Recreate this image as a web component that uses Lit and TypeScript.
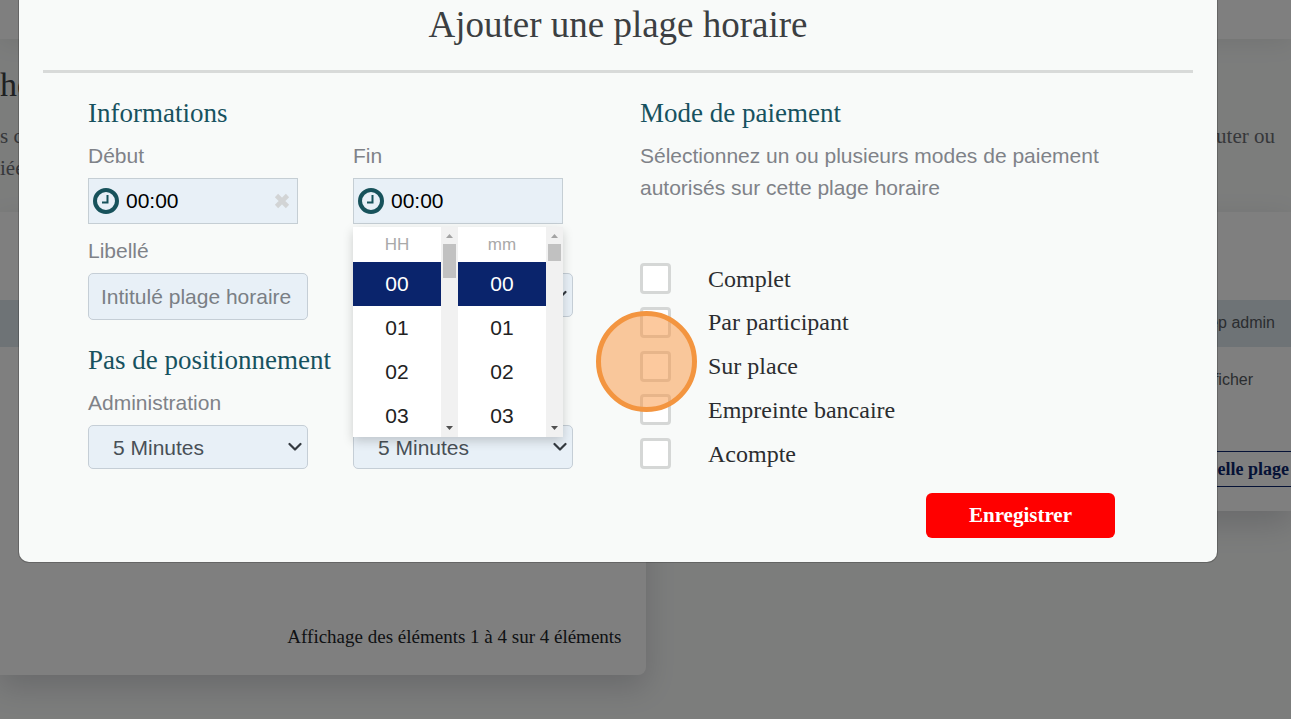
import { LitElement, html, css, svg } from "lit";
import { customElement, property } from "lit/decorators.js";
import { classMap } from "lit/directives/class-map.js";

const clockIcon = html`<svg class="clock" viewBox="0 0 26 26" aria-hidden="true">
  <circle cx="13" cy="13" r="11" fill="none" stroke="#17525b" stroke-width="4"></circle>
  <path d="M14.5 7v7.5H9" fill="none" stroke="#17525b" stroke-width="2"></path>
</svg>`;

const arrow = (d: string, fill: string) => html`<svg class="arrow" viewBox="0 0 17 17" aria-hidden="true">
  ${svg`<path d=${d} fill=${fill}></path>`}
</svg>`;

@customElement("time-column")
class TimeColumn extends LitElement {
  @property() unit = "";
  @property({ type: Boolean }) short = false;

  static styles = css`
    :host {
      display: flex;
      flex: 1;
      min-width: 0;
    }
    .list {
      flex: 1;
      margin: 0;
      padding: 0;
      list-style: none;
      background: #fff;
      text-align: center;
    }
    .unit {
      line-height: 35px;
      font-size: 17px;
      color: #a9a9a9;
    }
    .value {
      display: block;
      width: 100%;
      height: 44px;
      padding: 0;
      border: 0;
      background: none;
      font: inherit;
      color: #222;
    }
    .active {
      background: #0a246c;
      color: #fff;
    }
    .bar {
      display: flex;
      flex-direction: column;
      align-items: center;
      width: 17px;
      background: #f1f1f1;
    }
    .thumb {
      width: 13px;
      height: 34px;
      background: #c1c1c1;
      margin-bottom: auto;
    }
    .small {
      height: 17px;
    }
    .arrow {
      width: 17px;
      height: 17px;
    }
  `;

  render() {
    return html`
      <ul class="list">
        <li class="unit">${this.unit}</li>
        ${["00", "01", "02", "03"].map(
          (v, i) => html`<li>
            <button type="button" class=${classMap({ value: true, active: i === 0 })}>${v}</button>
          </li>`
        )}
      </ul>
      <div class="bar">
        ${arrow("M5 11l3.5-4 3.5 4z", "#a3a3a3")}
        <div class=${classMap({ thumb: true, small: this.short })}></div>
        ${arrow("M5 6h7l-3.5 4z", "#505050")}
      </div>
    `;
  }
}

@customElement("app-root")
class AppRoot extends LitElement {
  static styles = css`
    :host {
      display: block;
      position: relative;
      height: 100vh;
      overflow: hidden;
      background: #f8faf9;
      font-family: "Liberation Sans", Arial, sans-serif;
      font-size: 21px;
      color: #212529;
    }
    * {
      box-sizing: border-box;
    }
    h1,
    h2,
    p {
      margin: 0;
      font-weight: 400;
    }
    h1,
    h2,
    .serif {
      font-family: "Liberation Serif", "Times New Roman", serif;
    }

    .page {
      display: flex;
      flex-direction: column;
      height: 100%;
    }
    .topbar {
      height: 39px;
      background: #fff;
      box-shadow: 0 4px 24px rgba(0, 0, 0, 0.08);
    }
    .intro {
      height: 173px;
      padding: 25px 16px 0 0;
      color: #6c6f74;
      line-height: 32px;
    }
    .intro-title {
      font-size: 34px;
      line-height: 42px;
      color: #3c4044;
      margin-bottom: 14px;
    }
    .line {
      display: flex;
      justify-content: space-between;
    }
    .cards {
      flex: 1;
      display: grid;
      grid-template-columns: 1fr 1fr;
      align-items: start;
    }
    .card {
      background: #fff;
      box-shadow: 0 12px 30px rgba(20, 10, 40, 0.16);
      padding-top: 88px;
    }
    .card-left {
      height: 463px;
      display: flex;
      flex-direction: column;
      justify-content: space-between;
      border-radius: 0 0 8px 0;
    }
    .card-right {
      height: 299px;
      margin-left: 40px;
    }
    .band {
      height: 47px;
      line-height: 46px;
      background: #dde6ed;
    }
    .card-right .band,
    .cell {
      padding-right: 16px;
      font-size: 16px;
      text-align: right;
      color: #555a60;
    }
    .card-right .cell {
      padding-right: 38px;
      line-height: 65px;
    }
    .count {
      padding: 0 24px 27px 0;
      font-size: 19px;
      line-height: 22px;
      text-align: right;
    }
    .new-slot {
      display: block;
      width: 100%;
      height: 36px;
      margin-top: 39px;
      padding: 0 2px 0 0;
      border: solid #0a246c;
      border-width: 1px 0;
      background: none;
      color: #0a246c;
      font-size: 18px;
      font-weight: 700;
      text-align: right;
    }

    .backdrop {
      position: absolute;
      inset: 0;
      padding: 0 74px 0 19px;
      background: rgba(0, 0, 0, 0.5);
    }
    .modal {
      padding: 0 24px 24px;
      background: #f8faf9;
      border-radius: 0 0 10px 10px;
      box-shadow: 0 0 0 1px rgba(0, 0, 0, 0.2);
    }
    .title {
      padding: 4px 0 24px;
      border-bottom: 3px solid #d8dad9;
      font-size: 37px;
      line-height: 42px;
      text-align: center;
      color: #3c3f42;
    }
    .form {
      display: grid;
      grid-template-columns: minmax(0, 97fr) minmax(0, 95fr);
      column-gap: 67px;
      padding: 24px 78px 0 45px;
    }
    .heading {
      font-size: 27px;
      line-height: 32px;
      margin-bottom: 11px;
      color: #17525f;
    }
    .fields {
      display: grid;
      grid-template-columns: minmax(0, 1fr) minmax(0, 1fr);
      column-gap: 45px;
      row-gap: 11px;
    }
    .spaced {
      margin-top: 24px;
    }
    .field {
      display: flex;
      flex-direction: column;
      justify-content: flex-start;
    }
    .label {
      height: 32px;
      margin-bottom: 6px;
      line-height: 32px;
      color: #7f8288;
    }
    .time {
      position: relative;
      display: flex;
      align-items: center;
      gap: 7px;
      height: 46px;
      margin-right: 10px;
      padding: 0 6px 0 4px;
      background: #e8f0f7;
      border: 1px solid #c5ced4;
    }
    .clock {
      flex: none;
      width: 26px;
      height: 26px;
    }
    .clear {
      flex: none;
      width: 18px;
      height: 18px;
      padding: 0;
      border: 0;
      background: none;
    }
    .clear svg {
      display: block;
    }
    .time-input {
      flex: 1;
      min-width: 0;
      padding: 0;
      border: 0;
      outline: 0;
      background: none;
      font: inherit;
      color: #000;
    }
    .picker {
      position: absolute;
      z-index: 2;
      top: 48px;
      left: -1px;
      right: -1px;
      height: 210px;
      overflow: hidden;
      display: flex;
    }
    .picker-shadow {
      position: absolute;
      z-index: 1;
      top: 48px;
      left: -1px;
      right: -1px;
      height: 210px;
      box-shadow: 0 4px 10px rgba(0, 0, 0, 0.18);
    }
    .text,
    .select {
      width: 100%;
      border: 1px solid #c5ced6;
      border-radius: 5px;
      background: #e8f0f7;
      font: inherit;
    }
    .text {
      height: 47px;
      padding: 0 12px;
    }
    .text::placeholder {
      color: #7a7f85;
      opacity: 1;
    }
    .select-wrap {
      display: grid;
      align-items: center;
    }
    .select-wrap > * {
      grid-area: 1 / 1;
    }
    .select {
      appearance: none;
      height: 44px;
      padding: 0 24px;
      color: #495057;
    }
    .chevron {
      justify-self: end;
      width: 14px;
      height: 14px;
      margin-right: 6px;
      pointer-events: none;
    }
    .payment {
      display: flex;
      flex-direction: column;
    }
    .help {
      line-height: 32px;
      color: #7f8288;
      margin-bottom: 59px;
    }
    .options {
      flex: 1;
      display: flex;
      flex-direction: column;
      justify-content: space-between;
    }
    .option {
      position: relative;
      display: flex;
      align-items: center;
      gap: 37px;
      font-size: 24px;
      line-height: 30px;
      color: #2b2d30;
    }
    .check {
      appearance: none;
      flex: none;
      width: 31px;
      height: 31px;
      margin: 0;
      border: 3px solid #d5d7d6;
      border-radius: 4px;
      background: #fff;
    }
    .marker {
      position: absolute;
      z-index: 1;
      left: -44px;
      top: -40px;
      width: 101px;
      height: 101px;
      border: 5px solid #f39540;
      border-radius: 50%;
      background: rgba(250, 148, 62, 0.5);
      pointer-events: none;
    }
    .actions {
      display: flex;
      justify-content: flex-end;
      padding: 24px 78px 0 0;
    }
    .save {
      width: 189px;
      height: 45px;
      border: 0;
      border-radius: 6px;
      background: #f00;
      color: #fff;
      font-size: 21px;
      font-weight: 700;
    }
  `;

  private select(label: string, value: string) {
    return html`<div class="select-wrap">
      <select class="select" id=${label} aria-label=${label}>
        <option>${value}</option>
      </select>
      <svg class="chevron" viewBox="0 0 14 14" aria-hidden="true">
        <path d="M1.5 4L7 9.5 12.500 4" fill="none" stroke="#343a40" stroke-width="2.200" stroke-linecap="round" stroke-linejoin="round"></path>
      </svg>
    </div>`;
  }

  render() {
    return html`
      <div class="page">
        <header class="topbar"></header>
        <section class="intro serif">
          <h2 class="intro-title">ho</h2>
          <p class="line"><span>s c</span><span>uter ou</span></p>
          <p>iée</p>
        </section>
        <div class="cards">
          <section class="card card-left">
            <div class="band"></div>
            <p class="count serif">Affichage des éléments 1 à 4 sur 4 éléments</p>
          </section>
          <section class="card card-right">
            <div class="band">ep admin</div>
            <div class="cell">ficher</div>
            <button type="button" class="new-slot serif">elle plage</button>
          </section>
        </div>
      </div>

      <div class="backdrop">
        <form class="modal" role="dialog" aria-labelledby="title">
          <h1 class="title" id="title">Ajouter une plage horaire</h1>
          <div class="form">
            <div>
              <h2 class="heading">Informations</h2>
              <div class="fields">
                <div class="field">
                  <label class="label" for="start">Début</label>
                  <div class="time">
                    ${clockIcon}
                    <input class="time-input" id="start" value="00:00" />
                    <button type="button" class="clear" aria-label="Effacer">
                      <svg viewBox="0 0 18 18" width="18" height="18">
                        <path d="M3.500 3.500l11 11M14.500 3.500l-11 11" stroke="#d2d4d5" stroke-width="4.600"></path>
                      </svg>
                    </button>
                  </div>
                </div>
                <div class="field">
                  <label class="label" for="end">Fin</label>
                  <div class="time">
                    ${clockIcon}
                    <input class="time-input" id="end" value="00:00" />
                    <div class="picker-shadow"></div>
                    <div class="picker">
                      <time-column unit="HH"></time-column>
                      <time-column unit="mm" short></time-column>
                    </div>
                  </div>
                </div>
                <div class="field">
                  <label class="label" for="name">Libellé</label>
                  <input class="text" id="name" placeholder="Intitulé plage horaire" />
                </div>
                <div class="field">
                  <div class="label"></div>
                  ${this.select("Type", "")}
                </div>
              </div>
              <h2 class="heading spaced">Pas de positionnement</h2>
              <div class="fields">
                <div class="field">
                  <label class="label" for="Administration">Administration</label>
                  ${this.select("Administration", "5 Minutes")}
                </div>
                <div class="field">
                  <div class="label"></div>
                  ${this.select("Client", "5 Minutes")}
                </div>
              </div>
            </div>
            <div class="payment">
              <h2 class="heading">Mode de paiement</h2>
              <p class="help">Sélectionnez un ou plusieurs modes de paiement autorisés sur cette plage horaire</p>
              <div class="options">
                ${["Complet", "Par participant", "Sur place", "Empreinte bancaire", "Acompte"].map(
                  (name, i) => html`<label class="option serif">
                    <input type="checkbox" class="check" />${name}
                    ${i === 2 ? html`<span class="marker"></span>` : ""}
                  </label>`
                )}
              </div>
            </div>
          </div>
          <div class="actions">
            <button type="button" class="save serif">Enregistrer</button>
          </div>
        </form>
      </div>
    `;
  }
}
